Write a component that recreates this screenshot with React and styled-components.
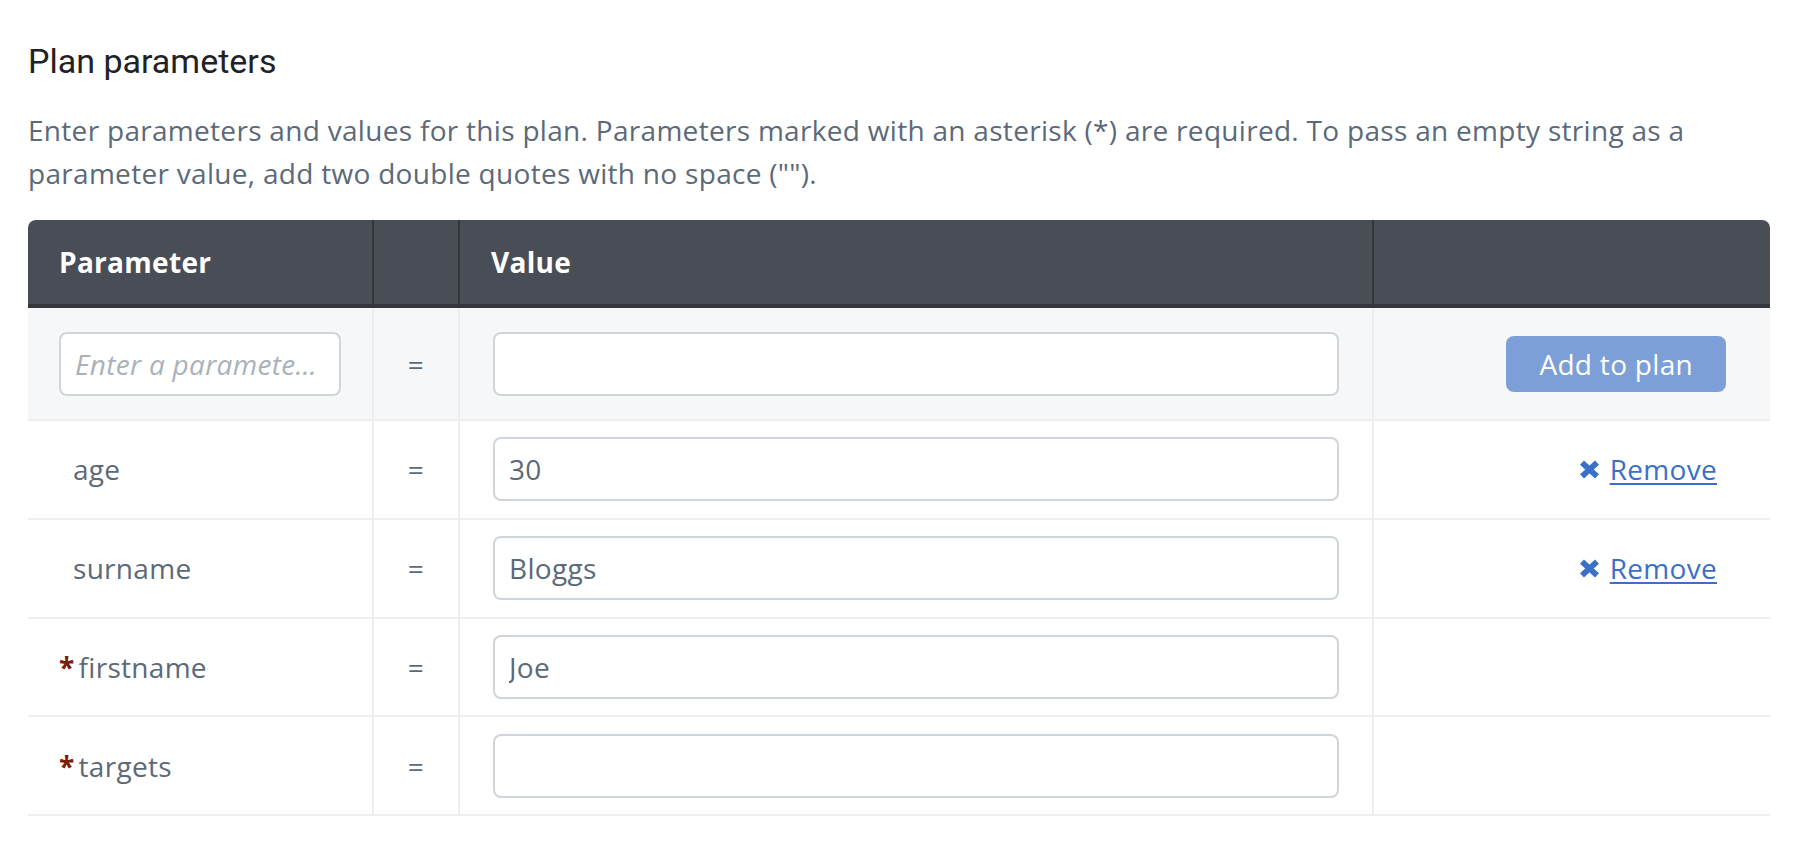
import React from 'react';
import styled, { createGlobalStyle } from 'styled-components';

const GlobalStyle = createGlobalStyle`
  html, body { margin: 0; padding: 0; background: #ffffff; }
  body { font-family: "Open Sans", "Noto Sans", sans-serif; letter-spacing: 0.3px; }
`;

const COLS = '346px 86px 914px 396px';

const Page = styled.div`
  padding: 41px 34px 0 28px;
`;

const Title = styled.h2`
  margin: 0;
  font-family: Roboto, "Liberation Sans", sans-serif;
  font-weight: 400;
  font-size: 34px;
  line-height: 40px;
  letter-spacing: 0;
  color: #1f2226;
`;

const Intro = styled.p`
  margin: 28px 0 25px;
  font-size: 28px;
  line-height: 43px;
  color: #5b6979;
`;

const Table = styled.div`
  width: 1742px;
`;

const HeadRow = styled.div`
  display: grid;
  grid-template-columns: ${COLS};
  height: 88px;
  box-sizing: border-box;
  background: #494e56;
  border-bottom: 4px solid #33373c;
  border-radius: 8px 8px 0 0;
`;

const HeadCell = styled.div`
  display: flex;
  align-items: center;
  padding: 0 31px;
  color: #ffffff;
  font-weight: 700;
  font-size: 28px;
  border-right: ${(p) => (p.$last ? 'none' : '2px solid #33373c')};
`;

const Row = styled.div`
  display: grid;
  grid-template-columns: ${COLS};
  height: ${(p) => (p.$add ? '113px' : '98.75px')};
  box-sizing: border-box;
  border-bottom: 2px solid #eceef0;
  background: ${(p) => (p.$add ? '#f5f7f9' : '#ffffff')};
`;

const Cell = styled.div`
  display: flex;
  align-items: center;
  justify-content: ${(p) => p.$justify || 'flex-start'};
  padding-left: ${(p) => (p.$padLeft != null ? p.$padLeft : 31)}px;
  padding-right: ${(p) => (p.$padRight != null ? p.$padRight : p.$padLeft != null ? p.$padLeft : 31)}px;
  border-right: ${(p) => (p.$last ? 'none' : '2px solid #eceef0')};
  min-width: 0;
  font-size: 28px;
  color: #5b6979;
`;

const TextInput = styled.input`
  display: block;
  width: 100%;
  height: 64px;
  box-sizing: border-box;
  margin: 0;
  border: 2px solid #cfd5da;
  border-radius: 8px;
  padding: 0 14px;
  font-family: "Open Sans", "Noto Sans", sans-serif;
  font-size: 28px;
  letter-spacing: 0.3px;
  color: #5b6979;
  background: #ffffff;
  text-overflow: ellipsis;
  outline: none;
  &::placeholder {
    color: #a9b1b9;
    font-style: italic;
    opacity: 1;
  }
`;

const ParamName = styled.span`
  padding-left: ${(p) => (p.$required ? 0 : 14)}px;
  white-space: nowrap;
`;

const Star = styled.span`
  color: #7a1d0c;
  font-weight: 700;
  margin-right: 4px;
`;

const Equals = styled.span`
  color: #5b6979;
`;

const AddButton = styled.button`
  height: 56px;
  padding: 0 33px;
  border: none;
  border-radius: 8px;
  background: #7c9fd7;
  color: #ffffff;
  font-family: "Open Sans", "Noto Sans", sans-serif;
  font-size: 28px;
  letter-spacing: 0.3px;
  cursor: pointer;
`;

const RemoveLink = styled.a`
  display: inline-flex;
  align-items: center;
  gap: 10px;
  margin-right: 9px;
  color: #3a70c7;
  font-size: 28px;
  text-decoration: none;
  cursor: pointer;
`;

const RemoveText = styled.span`
  text-decoration: underline;
  text-decoration-thickness: 2px;
  text-underline-offset: 3px;
`;

const CrossIcon = () => (
  <svg width="21" height="19" viewBox="0 0 21 19" aria-hidden="true">
    <path d="M3 2.6 L18 16.4 M18 2.6 L3 16.4" stroke="currentColor" strokeWidth="5.8" strokeLinecap="butt" fill="none" />
  </svg>
);

const params = [
  { name: 'age', value: '30', removable: true },
  { name: 'surname', value: 'Bloggs', removable: true },
  { name: 'firstname', value: 'Joe', required: true },
  { name: 'targets', value: '', required: true },
];

export default function App() {
  return (
    <Page>
      <GlobalStyle />
      <Title>Plan parameters</Title>
      <Intro>
        Enter parameters and values for this plan. Parameters marked with an asterisk (*) are required. To pass an empty
        string as a parameter value, add two double quotes with no space ("").
      </Intro>
      <Table>
        <HeadRow>
          <HeadCell>Parameter</HeadCell>
          <HeadCell />
          <HeadCell>Value</HeadCell>
          <HeadCell $last />
        </HeadRow>
        <Row $add>
          <Cell>
            <TextInput placeholder="Enter a parameter name" />
          </Cell>
          <Cell $justify="center" $padLeft={0}>
            <Equals>=</Equals>
          </Cell>
          <Cell $padLeft={33}>
            <TextInput />
          </Cell>
          <Cell $last $justify="flex-end" $padRight={44}>
            <AddButton type="button">Add to plan</AddButton>
          </Cell>
        </Row>
        {params.map((p) => (
          <Row key={p.name}>
            <Cell>
              <ParamName $required={p.required}>
                {p.required && <Star>*</Star>}
                {p.name}
              </ParamName>
            </Cell>
            <Cell $justify="center" $padLeft={0}>
              <Equals>=</Equals>
            </Cell>
            <Cell $padLeft={33}>
              <TextInput defaultValue={p.value} />
            </Cell>
            <Cell $last $justify="flex-end" $padRight={44}>
              {p.removable && (
                <RemoveLink>
                  <CrossIcon />
                  <RemoveText>Remove</RemoveText>
                </RemoveLink>
              )}
            </Cell>
          </Row>
        ))}
      </Table>
    </Page>
  );
}
